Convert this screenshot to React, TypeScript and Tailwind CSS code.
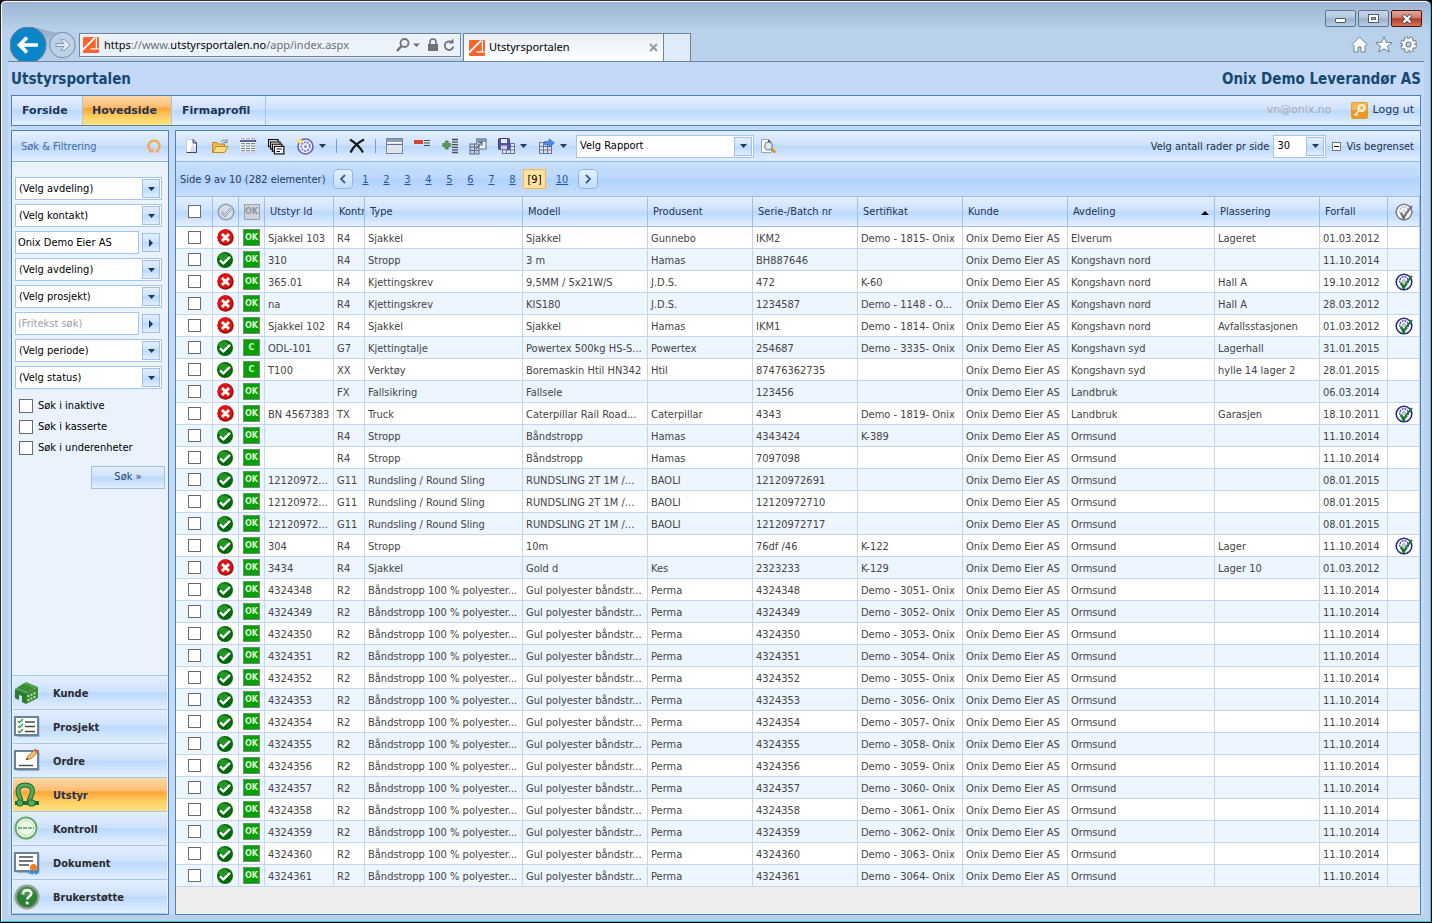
import React from 'react';

const GLOSS = 'bg-[linear-gradient(to_bottom,#e3efff_0%,#cfe2fc_45%,#bcd9fc_52%,#e3efff_100%)]';
const GLOSS_ORANGE = 'bg-[linear-gradient(to_bottom,#ffd8a9_0%,#ffbd72_38%,#ffa53a_42%,#ffd367_75%,#ffe27f_100%)]';
const FONT = "font-['DejaVu_Sans_Condensed','DejaVu_Sans',sans-serif]";
const FONT_WIDE = "font-['DejaVu_Sans',sans-serif]";
const FONT_CHROME = "font-['Noto_Sans',sans-serif]";

interface EquipmentRow {
  approved: boolean;
  badge: string;
  cells: string[];
  certified?: boolean;
}

const owner = 'Onix Demo Eier AS';

const firstRows: EquipmentRow[] = [
  { approved: false, badge: 'OK', cells: ['Sjakkel 103', 'R4', 'Sjakkel', 'Sjakkel', 'Gunnebo', 'IKM2', 'Demo - 1815- Onix', owner, 'Elverum', 'Lageret', '01.03.2012'] },
  { approved: true, badge: 'OK', cells: ['310', 'R4', 'Stropp', '3 m', 'Hamas', 'BH887646', '', owner, 'Kongshavn nord', '', '11.10.2014'] },
  { approved: false, badge: 'OK', certified: true, cells: ['365.01', 'R4', 'Kjettingskrev', '9,5MM / 5x21W/S', 'J.D.S.', '472', 'K-60', owner, 'Kongshavn nord', 'Hall A', '19.10.2012'] },
  { approved: false, badge: 'OK', cells: ['na', 'R4', 'Kjettingskrev', 'KIS180', 'J.D.S.', '1234587', 'Demo - 1148 - O...', owner, 'Kongshavn nord', 'Hall A', '28.03.2012'] },
  { approved: false, badge: 'OK', certified: true, cells: ['Sjakkel 102', 'R4', 'Sjakkel', 'Sjakkel', 'Hamas', 'IKM1', 'Demo - 1814- Onix', owner, 'Kongshavn nord', 'Avfallsstasjonen', '01.03.2012'] },
  { approved: true, badge: 'C', cells: ['ODL-101', 'G7', 'Kjettingtalje', 'Powertex 500kg HS-S...', 'Powertex', '254687', 'Demo - 3335- Onix', owner, 'Kongshavn syd', 'Lagerhall', '31.01.2015'] },
  { approved: true, badge: 'C', cells: ['T100', 'XX', 'Verktøy', 'Boremaskin Htil HN342', 'Htil', '87476362735', '', owner, 'Kongshavn syd', 'hylle 14 lager 2', '28.01.2015'] },
  { approved: false, badge: 'OK', cells: ['', 'FX', 'Fallsikring', 'Fallsele', '', '123456', '', owner, 'Landbruk', '', '06.03.2014'] },
  { approved: false, badge: 'OK', certified: true, cells: ['BN 4567383', 'TX', 'Truck', 'Caterpillar Rail Road...', 'Caterpillar', '4343', 'Demo - 1819- Onix', owner, 'Landbruk', 'Garasjen', '18.10.2011'] },
  { approved: true, badge: 'OK', cells: ['', 'R4', 'Stropp', 'Båndstropp', 'Hamas', '4343424', 'K-389', owner, 'Ormsund', '', '11.10.2014'] },
  { approved: true, badge: 'OK', cells: ['', 'R4', 'Stropp', 'Båndstropp', 'Hamas', '7097098', '', owner, 'Ormsund', '', '11.10.2014'] },
  { approved: true, badge: 'OK', cells: ['12120972...', 'G11', 'Rundsling / Round Sling', 'RUNDSLING 2T 1M /...', 'BAOLI', '12120972691', '', owner, 'Ormsund', '', '08.01.2015'] },
  { approved: true, badge: 'OK', cells: ['12120972...', 'G11', 'Rundsling / Round Sling', 'RUNDSLING 2T 1M /...', 'BAOLI', '12120972710', '', owner, 'Ormsund', '', '08.01.2015'] },
  { approved: true, badge: 'OK', cells: ['12120972...', 'G11', 'Rundsling / Round Sling', 'RUNDSLING 2T 1M /...', 'BAOLI', '12120972717', '', owner, 'Ormsund', '', '08.01.2015'] },
  { approved: true, badge: 'OK', certified: true, cells: ['304', 'R4', 'Stropp', '10m', '', '76df /46', 'K-122', owner, 'Ormsund', 'Lager', '11.10.2014'] },
  { approved: false, badge: 'OK', cells: ['3434', 'R4', 'Sjakkel', 'Gold d', 'Kes', '2323233', 'K-129', owner, 'Ormsund', 'Lager 10', '01.03.2012'] },
];

// The last 14 items are one series with running numbers
const seriesRows: EquipmentRow[] = Array.from({ length: 14 }, (_, i) => ({
  approved: true,
  badge: 'OK',
  cells: [
    String(4324348 + i), 'R2', 'Båndstropp 100 % polyester...', 'Gul polyester båndstr...', 'Perma',
    String(4324348 + i), `Demo - ${3051 + i}- Onix`, owner, 'Ormsund', '', '11.10.2014',
  ],
}));

const rows = [...firstRows, ...seriesRows];

const headers = ['Utstyr Id', 'Kontr', 'Type', 'Modell', 'Produsent', 'Serie-/Batch nr', 'Sertifikat', 'Kunde', 'Avdeling', 'Plassering', 'Forfall'];

/* ---------- small controls ---------- */

const CaretDown = ({ className = '' }: { className?: string }) => (
  <svg width="7" height="4" viewBox="0 0 7 4" className={className}>
    <path d="M0 0H7L3.5 4Z" fill="#1f3a5f" />
  </svg>
);

const SelectBox = ({ label, className = '' }: { label: string; className?: string }) => (
  <div className={`relative h-[23px] border border-[#a3c5f0] bg-white ${className}`}>
    <select aria-label={label} className="block h-full w-full appearance-none bg-transparent pl-[3px] pr-5 text-[11px] leading-4 text-black outline-none">
      <option>{label}</option>
    </select>
    <span className={`pointer-events-none absolute right-px top-px bottom-px flex w-[18px] items-center justify-center border border-[#9fc0ea] ${GLOSS}`}>
      <CaretDown />
    </span>
  </div>
);

const SearchField = ({ label, value }: { label: string; value?: string }) => (
  <div className="flex h-[23px] items-center gap-[3px]">
    <input
      type="text"
      aria-label={label}
      defaultValue={value}
      placeholder={label}
      className="h-full w-[124px] border border-[#a3c5f0] bg-white px-[2px] text-[11px] text-black outline-none placeholder:text-[#a0a0a0]"
    />
    <button type="button" aria-label={`Velg ${label}`} className={`flex h-[19px] w-[18px] items-center justify-center border border-[#9fc0ea] ${GLOSS}`}>
      <svg width="4" height="8" viewBox="0 0 4 8"><path d="M0 0L4 4L0 8Z" fill="#1f3a5f" /></svg>
    </button>
  </div>
);

const Tick = ({ label }: { label: string }) => (
  <input type="checkbox" aria-label={label} className="m-0 block h-[13px] w-[13px] shrink-0 appearance-none border border-[#6b6b6b] bg-white" />
);

/* ---------- icons ---------- */

const SiteIcon = () => (
  <svg width="16" height="16" viewBox="0 0 16 16" className="shrink-0">
    <rect width="16" height="16" rx="1" fill="#fb6330" />
    <path d="M0 12.5L12 0.5" stroke="#fff" strokeWidth="1.8" fill="none" />
    <path d="M13.4 0.5V11.5M7.5 11.8H15.5" stroke="#fff" strokeWidth="1.2" fill="none" />
  </svg>
);

const StatusOk = () => (
  <svg width="17" height="16" viewBox="0 0 17 16" className="mx-auto block">
    <circle cx="8" cy="8" r="8" fill="#04690b" />
    <ellipse cx="6.5" cy="5" rx="4.8" ry="3.8" fill="#2ba52c" opacity="0.75" />
    <path d="M3 8.4L6.3 11.4L13 4.8" stroke="#fff" strokeWidth="2.4" fill="none" />
  </svg>
);

const StatusBad = () => (
  <svg width="17" height="17" viewBox="0 0 17 17" className="mx-auto block">
    <circle cx="8.5" cy="8.5" r="8.2" fill="#a80606" />
    <circle cx="8" cy="7.8" r="7.2" fill="#e01212" />
    <path d="M5 5L12 12M12 5L5 12" stroke="#fff" strokeWidth="2.9" />
  </svg>
);

const CertIcon = ({ ring, inner, tick }: { ring: string; inner: string; tick: string }) => (
  <svg width="18" height="18" viewBox="0 0 18 18" className="mx-auto block">
    <circle cx="9" cy="9" r="7.8" fill="#fff" stroke={ring} strokeWidth="1.6" />
    <circle cx="9" cy="8" r="4.3" fill="none" stroke={inner} strokeWidth="1.5" strokeDasharray="2 0.9" />
    <circle cx="9" cy="8" r="1.4" fill="#fff" stroke={inner} strokeWidth="0.6" />
    <path d="M6 9.5L8.6 15.5L11 10.5L17 3" stroke={tick} strokeWidth="2" fill="none" />
  </svg>
);

const NewIcon = () => (
  <svg width="16" height="16" viewBox="0 0 16 16">
    <path d="M2.5 1.5H9L12.5 5V14.5H2.5Z" fill="#fff" stroke="#c3c8d8" />
    <path d="M8 6L12 9V14H6Z" fill="#d7ddea" />
    <path d="M12.5 5V14.5H2.5" stroke="#39416a" fill="none" />
    <path d="M9 1.5V5H12.5Z" fill="#dfe4f0" stroke="#39416a" />
  </svg>
);

const OpenIcon = () => (
  <svg width="18" height="16" viewBox="0 0 18 16">
    <path d="M1.5 14.5V4.5H6L7.5 6H13.5V14.5Z" fill="#f0bb4c" stroke="#bd8420" />
    <path d="M1.5 14.5L5 8.5H17L13.5 14.5Z" fill="#ffdc83" stroke="#c08a28" />
    <path d="M10 4C11 1.5 14 1.5 15.5 3.5M16 1V4.5H12.5" stroke="#6d7c91" fill="none" />
  </svg>
);

const ListIcon = () => (
  <svg width="17" height="16" viewBox="0 0 17 16">
    <rect x="1" y="1" width="16" height="15" fill="#d9d3f8" />
    <rect width="15" height="14" fill="#f6faff" />
    <path d="M0 3H16" stroke="#171d7d" strokeWidth="1.4" />
    <path d="M1 0.8H15" stroke="#8a94b0" strokeDasharray="4 1" />
    <path d="M1 5.6H15M1 8H15M1 10.400H15M1 12.800H15" stroke="#5d8078" strokeDasharray="4 1" />
  </svg>
);

const CopiesIcon = () => (
  <svg width="18" height="17" viewBox="0 0 18 17">
    <rect x="1.6" y="1.6" width="9.5" height="7" fill="#fff" stroke="#111" strokeWidth="1.2" />
    <rect x="3.6" y="4" width="9.5" height="7" fill="#fff" stroke="#111" strokeWidth="1.2" />
    <rect x="5.4" y="6.200" width="9.5" height="7" fill="#fff" stroke="#111" strokeWidth="1.2" />
    <rect x="7.400" y="8.400" width="9.500" height="7.500" fill="#fff" stroke="#111" strokeWidth="1.2" />
    <path d="M9.500 11H15M9.500 13.500H13" stroke="#111" />
  </svg>
);

const StampIcon = () => (
  <svg width="18" height="18" viewBox="0 0 18 18">
    <circle cx="9.500" cy="9.500" r="7.500" fill="#eeeeff" stroke="#6260b8" strokeWidth="1.600" />
    <circle cx="9.500" cy="9.500" r="4.300" fill="none" stroke="#7b79cc" strokeWidth="1.800" strokeDasharray="2 1" />
    <circle cx="9.500" cy="9.500" r="1.500" fill="#8e8cd6" />
    <path d="M4 0L5 3L8 4L5 5.5L4 8.5L2.8 5.5L0 4L3 3Z" fill="#ffdf5e" />
  </svg>
);

const DeleteIcon = () => (
  <svg width="18" height="16" viewBox="0 0 18 16">
    <path d="M2 1.5C6 4 12 9 15 14.5M16 1.5C11 4 5 9 2.5 14.5" stroke="#16181b" strokeWidth="2.2" fill="none" />
  </svg>
);

const WindowIcon = () => (
  <svg width="17" height="16" viewBox="0 0 17 16">
    <rect x="0.5" y="0.5" width="16" height="15" fill="#dfe4ea" stroke="#7486a0" />
    <rect x="1" y="1" width="15" height="3" fill="#8b9db6" />
    <path d="M1 6.5H16" stroke="#60728d" />
    <path d="M1 4.7H16" stroke="#fff" />
  </svg>
);

const RemoveRowIcon = () => (
  <svg width="18" height="16" viewBox="0 0 18 16">
    <rect x="1" y="2" width="9" height="4" fill="#d8422a" />
    <path d="M11 2.5H17M11 5H17M11 7.5H17" stroke="#4c4c4c" />
  </svg>
);

const AddRowIcon = () => (
  <svg width="17" height="16" viewBox="0 0 17 16">
    <path d="M3.2 3H6.2V5.5H8.7V8.5H6.2V11H3.2V8.5H0.7V5.5H3.2Z" fill="#5a9a55" stroke="#3f7b3c" strokeWidth="0.7" />
    <path d="M10 1.5H16M10 4.1H16M10 6.7H16M10 9.3H16M10 11.9H16M10 14.5H16" stroke="#4c4c4c" strokeWidth="1.3" />
  </svg>
);

const SplitIcon = () => (
  <svg width="18" height="17" viewBox="0 0 18 17">
    <rect x="7.5" y="1" width="9.5" height="10" fill="#f3f5f8" stroke="#5b6c84" />
    <rect x="7" y="0.5" width="10.5" height="3.5" fill="#7f92ad" />
    <rect x="1" y="6" width="9" height="10" fill="#c6cfdb" stroke="#5b6c84" />
    <path d="M1 9H10M1 12.5H10M5.5 6V16" stroke="#5b6c84" />
    <path d="M7 11L13 4.5M9.5 4.5H13V8" stroke="#39506e" fill="none" />
  </svg>
);

const SaveGridIcon = () => (
  <svg width="17" height="17" viewBox="0 0 17 17">
    <rect x="4.5" y="5.5" width="12" height="10" fill="#e6ebf3" stroke="#64779a" />
    <path d="M4.5 8.5H16.5M4.5 12H16.5M8.5 5.5V15.5M12.5 5.5V15.5" stroke="#64779a" />
    <rect x="0.5" y="0.5" width="11" height="11" rx="1" fill="#5552a8" stroke="#3f3c8c" />
    <rect x="3" y="1" width="6" height="4" fill="#e8eaf6" />
    <rect x="3" y="7.5" width="6" height="4" fill="#c9cbe8" />
  </svg>
);

const ExportIcon = () => (
  <svg width="17" height="17" viewBox="0 0 17 17">
    <rect x="1.5" y="4.5" width="12" height="11" fill="#dde5f1" stroke="#64779a" />
    <path d="M1.5 8.5H13.5M1.5 12H13.5M5.5 4.5V15.5M9.5 4.5V15.5" stroke="#64779a" />
    <path d="M6.5 3.5H11V0.7L16.4 5L11 9.3V6.8H6.5Z" fill="#5088e0" stroke="#3468bb" strokeWidth="0.7" />
  </svg>
);

const PreviewIcon = () => (
  <svg width="17" height="16" viewBox="0 0 17 16">
    <path d="M1.5 1.5H8L11.5 5V14.5H1.5Z" fill="#fff" stroke="#9ca4b4" />
    <path d="M8 1V5H12" fill="#48505f" />
    <circle cx="8.5" cy="8" r="3.8" fill="#dcecf5" stroke="#7e8a96" strokeWidth="1.3" />
    <path d="M11.5 11L15.5 14.5" stroke="#d9962c" strokeWidth="2.6" />
  </svg>
);

const KundeIcon = () => (
  <svg width="26" height="26" viewBox="0 0 26 26">
    <path d="M1 9L12 2L24 7L12 13Z" fill="#4aa046" />
    <path d="M1 9L12 13V24L8 22V16L5 15V20L1 18Z" fill="#2c7a30" />
    <path d="M12 13L24 7V18L12 24Z" fill="#3a8c3a" />
    <path d="M4 7L15 11M8 4.5L19 9M6 5.7L17 10" stroke="#2d7a2f" />
    <path d="M14.500 15V17M17.500 13.700V15.700M20.500 12.200V14.200M14.500 19V21M17.500 17.500V19.500M20.500 16V18" stroke="#c5ecb9" strokeWidth="1.800" />
  </svg>
);

const CardFrame = ({ children }: { children: React.ReactNode }) => (
  <svg width="26" height="26" viewBox="0 0 26 26">
    <path d="M3 22.5H25V4" stroke="#9dacbd" fill="none" />
    <rect x="1" y="3" width="23" height="18" fill="#fff" stroke="#6b8298" strokeWidth="2" />
    {children}
  </svg>
);

const ProsjektIcon = () => (
  <CardFrame>
    <path d="M4 7L5.500 8.500L9 5M4 12L5.500 13.500L9 10M4 17L5.500 18.500L9 15" stroke="#3c9c43" strokeWidth="1.5" fill="none" />
    <path d="M11 8H21M11 12.500H21M11 17.500H21" stroke="#4a4a4a" strokeWidth="1.4" />
  </CardFrame>
);

const OrdreIcon = () => (
  <CardFrame>
    <path d="M5 17.500H19" stroke="#4a4a4a" strokeWidth="1.4" />
    <path d="M12 12L14 8L21.500 1L24.500 4L17 10.500Z" fill="#f0c472" stroke="#98662f" strokeWidth="0.8" />
    <path d="M20 2.400L21.500 1L24.500 4L23 5.400Z" fill="#d35e49" />
    <path d="M12 12L13 10L14.500 11Z" fill="#333" />
  </CardFrame>
);

const UtstyrIcon = () => (
  <svg width="26" height="26" viewBox="0 0 26 26">
    <path d="M7 20C7.5 16.5 3.5 13 4 8.5C4.5 4.5 7.5 3 11 3C14.5 3 18 4.5 18.5 8.5C19 13 14.5 16.5 15.5 20" stroke="#1f6a31" strokeWidth="5" fill="none" />
    <path d="M7 20C7.5 16.5 3.5 13 4 8.5C4.5 4.5 7.5 3 11 3C14.5 3 18 4.5 18.5 8.5C19 13 14.5 16.5 15.5 20" stroke="#4fae58" strokeWidth="3" fill="none" />
    <path d="M1 21H25" stroke="#1f6a31" strokeWidth="4" />
    <rect x="3" y="18" width="6" height="6" rx="2" fill="#4fae58" stroke="#1f6a31" />
    <rect x="14" y="18" width="7" height="6" rx="2" fill="#4fae58" stroke="#1f6a31" />
  </svg>
);

const KontrollIcon = () => (
  <svg width="26" height="26" viewBox="0 0 26 26">
    <circle cx="12" cy="12" r="10.5" fill="#eef8ea" stroke="#68ab68" strokeWidth="2" />
    <circle cx="12" cy="12" r="7.5" fill="none" stroke="#a6d39f" strokeDasharray="2 1" />
    <path d="M4 12H20" stroke="#52a257" strokeWidth="1.6" strokeDasharray="4 1" />
  </svg>
);

const DokumentIcon = () => (
  <CardFrame>
    <path d="M5 7H19M5 11H19M5 15H15" stroke="#4a4a4a" strokeWidth="1.5" />
    <path d="M17 19L14 24L17 23.5L18 25L20 23L22 25L23 23.5L25 24L22 19Z" fill="#2b92dc" />
    <circle cx="19.5" cy="17.5" r="3.5" fill="#ef7c26" />
  </CardFrame>
);

const HelpIcon = () => (
  <svg width="26" height="26" viewBox="0 0 26 26">
    <circle cx="13" cy="13" r="12.5" fill="#96a096" />
    <circle cx="13" cy="13" r="10.3" fill="#2c8136" />
    <ellipse cx="13" cy="8" rx="7.5" ry="4.5" fill="#56a95b" opacity="0.6" />
    <path d="M9 10.2C9 7.5 11 6.3 13.2 6.3C15.5 6.3 17.2 7.7 17.2 9.8C17.2 12.5 13.2 12.6 13.2 15.5" stroke="#fff" strokeWidth="2.5" fill="none" />
    <circle cx="13.2" cy="19" r="1.6" fill="#fff" />
  </svg>
);

/* ---------- browser chrome ---------- */

const BrowserChrome = () => (
  <header className={`flex flex-col ${FONT_CHROME}`}>
    <div className="flex h-[25px] items-end justify-end gap-[2px] pr-2">
      <button type="button" aria-label="Minimer" className="flex h-[17px] w-[31px] items-end justify-center rounded-[2px] border border-[#5f7391] bg-[linear-gradient(to_bottom,#c6d7ea_0%,#b0c5dd_48%,#98b1cc_52%,#b7cde4_100%)] pb-[3px]">
        <span className="h-[5px] w-[11px] rounded-[1px] border border-[#525c6b] bg-white" />
      </button>
      <button type="button" aria-label="Maksimer" className="flex h-[17px] w-[31px] items-center justify-center rounded-[2px] border border-[#5f7391] bg-[linear-gradient(to_bottom,#c6d7ea_0%,#b0c5dd_48%,#98b1cc_52%,#b7cde4_100%)]">
        <svg width="11" height="9" viewBox="0 0 11 9"><rect x="0.5" y="0.5" width="10" height="8" fill="#fff" stroke="#525c6b" /><rect x="3.5" y="3.5" width="4" height="2" fill="#a9bfd8" stroke="#525c6b" /></svg>
      </button>
      <button type="button" aria-label="Lukk" className="flex h-[17px] w-[31px] items-center justify-center rounded-[2px] border border-[#4f1410] bg-[linear-gradient(to_bottom,#e3a798_0%,#cf7a68_46%,#b53a22_52%,#d6765a_100%)]">
        <svg width="12" height="10" viewBox="0 0 12 10"><path d="M2 1L10 9M10 1L2 9" stroke="#4d4e5c" strokeWidth="4" /><path d="M2.5 1.5L9.5 8.5M9.5 1.5L2.5 8.5" stroke="#fff" strokeWidth="2.2" /></svg>
      </button>
    </div>
    <div className="flex h-[34px] items-end pl-2 pr-[13px]">
      <svg width="69" height="34" viewBox="0 0 69 34" className="shrink-0">
        <defs>
          <linearGradient id="wedge" x1="0" y1="0" x2="0" y2="1">
            <stop offset="0" stopColor="#90a7c4" />
            <stop offset="0.7" stopColor="#b5cce6" />
          </linearGradient>
        </defs>
        <path d="M18 0C32 0 38 6 52 6V33H18Z" fill="url(#wedge)" />
        <circle cx="52.5" cy="18" r="12.6" fill="#bdd2ea" stroke="#8799b1" strokeWidth="1.2" />
        <path d="M46 16.5H54L50.5 12.7H54.8L60 18L54.8 23.3H50.5L54 19.5H46Z" fill="#dfeaf7" stroke="#8799b1" />
        <circle cx="18" cy="18" r="18" fill="#0a86c8" stroke="#667b95" />
        <path d="M28 18H10M17 10.5L9.5 18L17 25.5" stroke="#fff" strokeWidth="3.6" fill="none" />
      </svg>
      <div className="mb-1 flex h-6 w-[382px] shrink-0 items-center border border-[#6f8399] bg-[#ecf2fa] px-[3px] shadow-[1px_1px_0_#e2edf8]">
        <SiteIcon />
        <div className="ml-[5px] flex-1 whitespace-nowrap text-[11px] text-[#6b6f75]">
          <span className="text-black">https</span>://www.<span className="text-black">utstyrsportalen.no</span>/app/index.aspx
        </div>
        <svg width="61" height="16" viewBox="0 0 61 16" fill="none" className="shrink-0">
          <circle cx="8.5" cy="6" r="4" stroke="#6e7276" strokeWidth="1.8" />
          <path d="M5.5 9L1 14" stroke="#6e7276" strokeWidth="2.4" />
          <path d="M17 6.5H24L20.5 10Z" fill="#6e7276" />
          <rect x="32" y="7" width="10" height="7" fill="#6e7276" />
          <path d="M34 7V5C34 1 40 1 40 5V7" stroke="#6e7276" strokeWidth="1.6" />
          <path d="M56 5.5A4.3 4.3 0 1 0 57.3 9.5" stroke="#6e7276" strokeWidth="1.8" />
          <path d="M57.5 1.5V6.5H52.5Z" fill="#6e7276" />
        </svg>
      </div>
      <div className="ml-[2px] flex h-[28px] w-[201px] shrink-0 items-center border border-b-0 border-[#6f8399] bg-[linear-gradient(to_bottom,#e8eef3,#ffffff)] px-[5px]">
        <SiteIcon />
        <span className="ml-1 flex-1 text-[11px] text-black">Utstyrsportalen</span>
        <button type="button" aria-label="Lukk fane">
          <svg width="9" height="9" viewBox="0 0 9 9"><path d="M1 1L8 8M8 1L1 8" stroke="#999da1" strokeWidth="2.2" /></svg>
        </button>
      </div>
      <button type="button" aria-label="Ny fane" className="h-[28px] w-[27px] border border-b-0 border-l-0 border-[#6f8399] bg-[#deebf8]" />
      <div className="mb-2 ml-auto flex items-center gap-[7px]">
        <svg width="17" height="17" viewBox="0 0 17 17"><path d="M8.5 1L16 8.5L14.5 10L14 9.5V16H10V11H7V16H3V9.5L2.5 10L1 8.5Z" fill="#fff" stroke="#6f8196" /></svg>
        <svg width="18" height="17" viewBox="0 0 18 17"><path d="M9 0.8L11.3 6.3L17.2 6.6L12.5 10.3L14.2 16L9 12.8L3.8 16L5.5 10.3L0.8 6.6L6.7 6.3Z" fill="#fff" stroke="#6f8196" /></svg>
        <svg width="17" height="17" viewBox="0 0 17 17">
          <circle cx="8.5" cy="8.5" r="6.3" fill="none" stroke="#6f8196" strokeWidth="4.2" strokeDasharray="3.55 1.4" />
          <circle cx="8.5" cy="8.5" r="4.4" fill="none" stroke="#6f8196" strokeWidth="4.6" />
          <circle cx="8.5" cy="8.5" r="6.1" fill="none" stroke="#fff" strokeWidth="2.8" strokeDasharray="2 2.79" strokeDashoffset="-0.7" />
          <circle cx="8.5" cy="8.5" r="4.4" fill="none" stroke="#fff" strokeWidth="2.6" />
        </svg>
      </div>
    </div>
  </header>
);

/* ---------- left panel ---------- */

const navItems = [
  { label: 'Kunde', icon: <KundeIcon /> },
  { label: 'Prosjekt', icon: <ProsjektIcon /> },
  { label: 'Ordre', icon: <OrdreIcon /> },
  { label: 'Utstyr', icon: <UtstyrIcon />, active: true },
  { label: 'Kontroll', icon: <KontrollIcon /> },
  { label: 'Dokument', icon: <DokumentIcon /> },
  { label: 'Brukerstøtte', icon: <HelpIcon /> },
];

const Sidebar = () => (
  <aside className="flex w-[158px] shrink-0 flex-col border border-[#4a86b0] bg-[#eaf2fd]">
    <div className={`flex h-[31px] items-center justify-between border-b border-[#8db5e5] pl-[9px] pr-[7px] ${GLOSS}`}>
      <h2 className="pt-[2px] text-[11px] text-[#3f6ba5]">Søk &amp; Filtrering</h2>
      <svg width="14" height="14" viewBox="0 0 14 14">
        <path d="M4.5 12A5.5 5.5 0 1 1 9.5 12" stroke="#f5a94c" strokeWidth="2.4" fill="none" />
        <path d="M2 12.8H6V9.5M12 12.8H8.5" stroke="#f5a94c" strokeWidth="1.4" fill="none" />
      </svg>
    </div>
    <form className="flex flex-1 flex-col px-[3px] pt-[15px]">
      <div className="flex flex-col gap-1 pr-[3px]">
        <SelectBox label="(Velg avdeling)" />
        <SelectBox label="(Velg kontakt)" />
        <SearchField label="Kunde" value="Onix Demo Eier AS" />
        <SelectBox label="(Velg avdeling)" />
        <SelectBox label="(Velg prosjekt)" />
        <SearchField label="(Fritekst søk)" />
        <SelectBox label="(Velg periode)" />
        <SelectBox label="(Velg status)" />
      </div>
      <div className="mt-[6px] flex flex-col pl-1">
        {['Søk i inaktive', 'Søk i kasserte', 'Søk i underenheter'].map((text) => (
          <label key={text} className="flex h-[21px] items-center gap-[5px] text-[11px] text-black">
            <input type="checkbox" className="m-0 h-[14px] w-[14px] appearance-none border border-[#6b6b6b] bg-white" />
            <span className="pt-[2px]">{text}</span>
          </label>
        ))}
      </div>
      <button type="button" className={`mt-2 h-[23px] w-[74px] self-end border border-[#9fc0ea] text-[11px] text-[#24456f] ${GLOSS}`}>
        Søk »
      </button>
    </form>
    <nav className="border-t border-[#a3c5f0]">
      {navItems.map((item) => (
        <a
          key={item.label}
          href="#"
          className={`mx-px flex h-[34px] items-center gap-[13px] border-b border-[#a3c5f0] pl-px text-[11px] font-bold ${item.active ? `text-[#1d3057] ${GLOSS_ORANGE}` : `text-[#2b2b2b] ${GLOSS}`}`}
        >
          {item.icon}
          <span className="pt-1">{item.label}</span>
        </a>
      ))}
    </nav>
  </aside>
);

/* ---------- main panel ---------- */

const ToolButton = ({ label, children, menu = false }: { label: string; children: React.ReactNode; menu?: boolean }) => (
  <button type="button" aria-label={label} title={label} className={`flex h-7 shrink-0 items-center ${menu ? 'w-10 gap-[5px] pl-[6px]' : 'w-7 justify-center'}`}>
    {children}
    {menu && <CaretDown />}
  </button>
);

const Toolbar = () => (
  <div className={`flex h-[31px] items-center border-b border-[#8db5e5] pl-[2px] pr-[6px] text-[11px] ${GLOSS}`}>
    <ToolButton label="Ny"><NewIcon /></ToolButton>
    <ToolButton label="Åpne"><OpenIcon /></ToolButton>
    <ToolButton label="Liste"><ListIcon /></ToolButton>
    <ToolButton label="Kopier"><CopiesIcon /></ToolButton>
    <ToolButton label="Kontroll" menu><StampIcon /></ToolButton>
    <span className="mx-[6px] h-[14px] w-px bg-[#6f9fd8]" />
    <ToolButton label="Slett"><DeleteIcon /></ToolButton>
    <span className="mx-1 h-[14px] w-px bg-[#6f9fd8]" />
    <ToolButton label="Vindu"><WindowIcon /></ToolButton>
    <ToolButton label="Fjern rad"><RemoveRowIcon /></ToolButton>
    <ToolButton label="Legg til rad"><AddRowIcon /></ToolButton>
    <ToolButton label="Flytt"><SplitIcon /></ToolButton>
    <ToolButton label="Lagre" menu><SaveGridIcon /></ToolButton>
    <ToolButton label="Eksporter" menu><ExportIcon /></ToolButton>
    <SelectBox label="Velg Rapport" className="ml-1 w-[178px]" />
    <ToolButton label="Forhåndsvis"><PreviewIcon /></ToolButton>
    <label className="ml-auto flex items-center gap-1 text-[#1f2f4a]">
      <span className="pt-[2px]">Velg antall rader pr side</span>
      <SelectBox label="30" className="w-[53px]" />
    </label>
    <button type="button" className="ml-[6px] flex items-center gap-[5px] text-[#1f2f4a]">
      <svg width="9" height="9" viewBox="0 0 9 9"><rect x="0.5" y="0.5" width="8" height="8" fill="#fff" stroke="#777" /><path d="M2 4.5H7" stroke="#000" /></svg>
      <span className="pt-[2px]">Vis begrenset</span>
    </button>
  </div>
);

const PageArrow = ({ label, d }: { label: string; d: string }) => (
  <button type="button" aria-label={label} className="flex h-5 w-5 items-center justify-center rounded-[4px] border border-[#8fb8e0] bg-[linear-gradient(to_bottom,#e4f0fd,#c3dcf8)]">
    <svg width="8" height="10" viewBox="0 0 8 10"><path d={d} stroke="#3d5f96" strokeWidth="1.8" fill="none" /></svg>
  </button>
);

const Pager = () => (
  <div className="flex h-[35px] items-center border-b border-[#9cbfea] bg-[linear-gradient(to_bottom,#c9dffd_0%,#bcd9fd_45%,#b0d2fd_50%,#c6defd_100%)] pl-1 text-[11px] text-[#2c3e5c]">
    <span className="w-[153px] whitespace-nowrap pt-[2px]">Side 9 av 10 (282 elementer)</span>
    <PageArrow label="Forrige side" d="M6 1L2 5L6 9" />
    <div className="ml-[2px] flex items-center">
      {['1', '2', '3', '4', '5', '6', '7', '8'].map((page) => (
        <a key={page} href="#" className="w-[21px] pt-[2px] text-center text-[#2a56a5] underline">{page}</a>
      ))}
      <span className="flex h-5 w-[23px] items-center justify-center border border-[#ffb650] bg-[#ffe39c] pt-[2px] text-black">[9]</span>
      <a href="#" className="w-8 pt-[2px] text-center text-[#2a56a5] underline">10</a>
    </div>
    <PageArrow label="Neste side" d="M2 1L6 5L2 9" />
  </div>
);

const headCell = `h-[30px] overflow-hidden whitespace-nowrap border-b border-r border-[#9cbfea] text-left font-normal ${GLOSS}`;

const EquipmentTable = () => (
  <table className="w-full table-fixed border-separate border-spacing-0 text-[11px]">
    <colgroup>
      <col className="w-[37px]" />
      <col className="w-[26px]" />
      <col className="w-[26px]" />
      <col className="w-[69px]" />
      <col className="w-[31px]" />
      <col className="w-[158px]" />
      <col className="w-[125px]" />
      <col className="w-[105px]" />
      <col className="w-[105px]" />
      <col className="w-[105px]" />
      <col className="w-[105px]" />
      <col />
      <col className="w-[105px]" />
      <col className="w-[68px]" />
      <col className="w-[32px]" />
    </colgroup>
    <thead className="text-[#1f3557]">
      <tr>
        <th className={`pl-3 ${headCell}`}><Tick label="Velg alle" /></th>
        <th className={headCell}>
          <svg width="18" height="18" viewBox="0 0 18 18" className="mx-auto block">
            <circle cx="9" cy="9" r="7.8" fill="#d3deec" stroke="#979da5" strokeWidth="1.5" />
            <path d="M4.5 9L7.8 12.5L14 5.5" stroke="#979da5" strokeWidth="2.6" fill="none" />
            <path d="M4.5 9L7.8 12.5L14 5.5" stroke="#eef1f5" fill="none" />
          </svg>
        </th>
        <th className={headCell}>
          <span className="mx-auto flex h-4 w-4 items-center justify-center border border-[#9aa0a8] bg-[#ccd3dc] text-[9px] font-bold leading-none text-[#9095a0]">OK</span>
        </th>
        {headers.map((text) => (
          <th key={text} className={`pl-[5px] ${headCell}`}>
            <span className="flex items-center pt-[2px]">
              {text}
              {text === 'Avdeling' && <svg width="8" height="4" viewBox="0 0 8 4" className="ml-auto mr-[5px]"><path d="M0 4H8L4 0Z" fill="#000" /></svg>}
            </span>
          </th>
        ))}
        <th className={headCell}><CertIcon ring="#7c7f83" inner="#a9b4bd" tick="#6c6f72" /></th>
      </tr>
    </thead>
    <tbody className="text-[#444444]">
      {rows.map((row, index) => (
        <tr key={index} className="odd:bg-white even:bg-[#edf5ff]">
          <td className="h-[22px] border-b border-r border-[#c3d6ef] pl-3"><Tick label={`Velg rad ${index + 1}`} /></td>
          <td className="border-b border-r border-[#c3d6ef]">{row.approved ? <StatusOk /> : <StatusBad />}</td>
          <td className="border-b border-r border-[#c3d6ef]">
            <span className="mx-auto flex h-[17px] w-[17px] items-center justify-center border border-[#6f8f6f] bg-[#08a008] text-[9px] font-bold leading-none text-[#d9f7d0]">{row.badge}</span>
          </td>
          {row.cells.map((cell, i) => (
            <td key={i} className="overflow-hidden whitespace-nowrap border-b border-r border-[#c3d6ef] pl-[3px] pt-[2px] leading-4">{cell}</td>
          ))}
          <td className="border-b border-r border-[#c3d6ef]">
            {row.certified && <CertIcon ring="#26268c" inner="#4a4ab4" tick="#0f7a1c" />}
          </td>
        </tr>
      ))}
    </tbody>
  </table>
);

const App: React.FC = () => {
  return (
    <div className={`flex min-h-screen flex-col bg-black ${FONT}`}>
      <div className="mb-px mr-px flex flex-1 flex-col rounded-t-[6px] border border-b-[#35c3dc] border-l-[#1d2530] border-r-[#35c3dc] border-t-[#332f36] bg-[linear-gradient(to_bottom,#9bb4d2_0px,#b9d1ea_30px,#b9d1ea_100%)]">
        <div className="flex flex-1 flex-col rounded-t-[5px] border-l border-t border-white pb-[6px]">
          <BrowserChrome />
          <div className="mx-[6px] flex flex-1 flex-col border-t border-[#6f8399] bg-[#c4d9f8] px-[3px]">
            <div className="flex h-[33px] items-center justify-between pt-[2px] text-[15px] font-bold text-[#15496d]">
              <h1>Utstyrsportalen</h1>
              <span>Onix Demo Leverandør AS</span>
            </div>
            <div className={`flex h-[31px] items-stretch border border-[#4a86b0] text-[11px] ${FONT_WIDE} ${GLOSS}`}>
              <nav className="flex font-bold text-[#1f3557]">
                <a href="#" className="flex w-[71px] items-center border-r border-[#a3c5f0] pl-[10px] pt-[2px]">Forside</a>
                <a href="#" className={`flex w-[89px] items-center border-r border-[#a3c5f0] pl-[9px] pt-[2px] ${GLOSS_ORANGE}`}>Hovedside</a>
                <a href="#" className="flex w-[94px] items-center border-r border-[#a3c5f0] pl-[10px] pt-[2px]">Firmaprofil</a>
              </nav>
              <div className="ml-auto flex items-center pr-[6px]">
                <span className="text-[#a9a9a9]">vn@onix.no</span>
                <a href="#" className="ml-[19px] flex items-center gap-[5px] text-[#1f3557]">
                  <svg width="17" height="17" viewBox="0 0 17 17">
                    <rect width="17" height="17" rx="2" fill="#e8992a" />
                    <rect x="1" y="1" width="15" height="7" rx="1" fill="#f3b85c" />
                    <circle cx="10.5" cy="6" r="3" fill="none" stroke="#fff4dc" strokeWidth="1.8" />
                    <path d="M8.5 8L3.5 13.5M5 12L6.5 13.5" stroke="#fff4dc" strokeWidth="1.8" />
                  </svg>
                  Logg ut
                </a>
              </div>
            </div>
            <div className="mt-1 flex flex-1 gap-[6px]">
              <Sidebar />
              <main className="flex min-w-0 flex-1 flex-col border border-[#4a86b0] bg-[#eeeeee]">
                <Toolbar />
                <Pager />
                <EquipmentTable />
              </main>
            </div>
          </div>
        </div>
      </div>
    </div>
  );
};

export default App;
